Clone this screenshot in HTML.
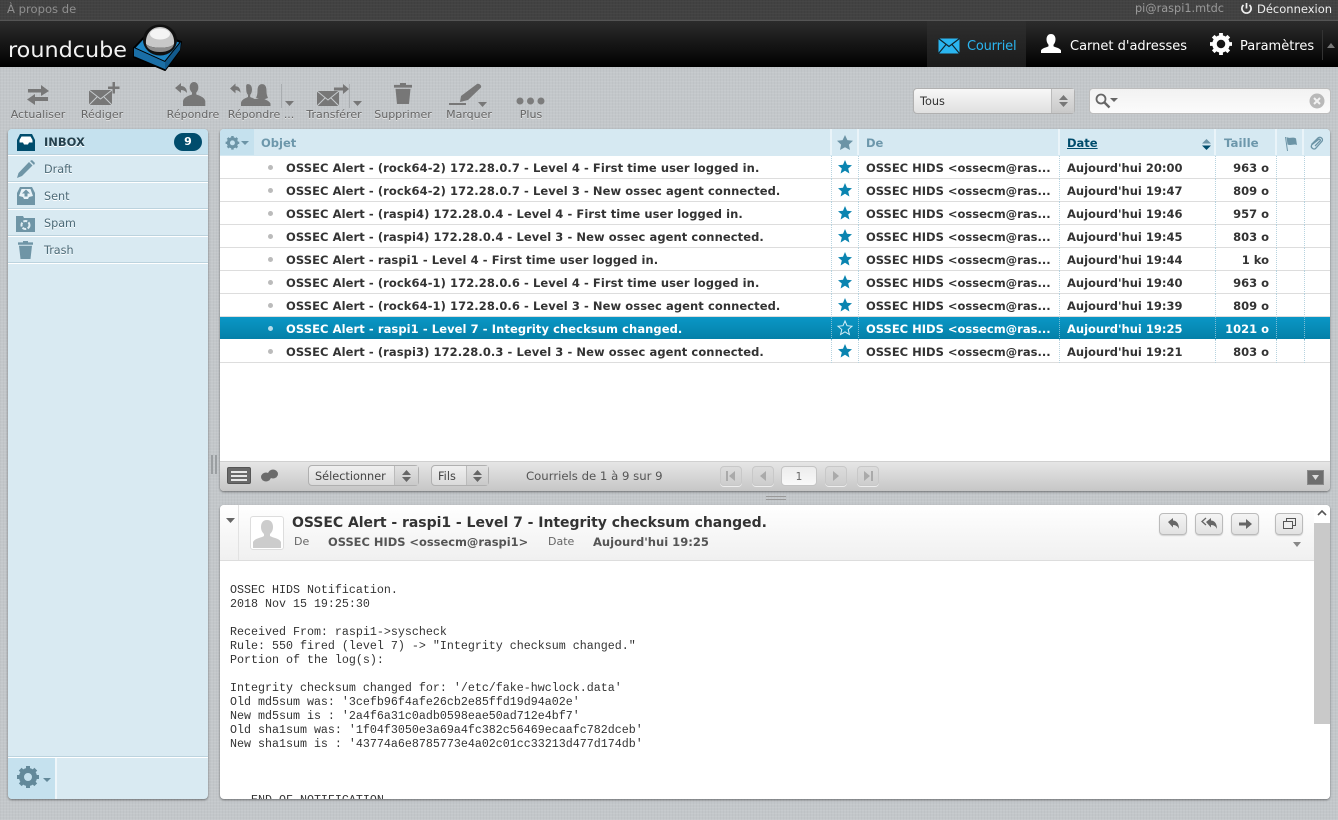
<!DOCTYPE html>
<html><head><meta charset="utf-8"><title>roundcube</title>
<style>
*{box-sizing:border-box}
html,body{margin:0;padding:0;width:1338px;height:820px;overflow:hidden}
body{position:relative;font-family:"DejaVu Sans","Liberation Sans",sans-serif;font-size:11px;color:#333;
background-color:#c3c7ca;background-image:repeating-linear-gradient(0deg,rgba(255,255,255,.07) 0 1px,transparent 1px 3px),repeating-linear-gradient(90deg,rgba(0,0,0,.025) 0 1px,transparent 1px 3px)}
.a{position:absolute;white-space:nowrap}
svg{position:absolute;overflow:visible}
#top{left:0;top:0;width:1338px;height:21px;background-color:#424242;background-image:repeating-linear-gradient(0deg,rgba(255,255,255,.025) 0 1px,transparent 1px 3px),repeating-linear-gradient(90deg,rgba(0,0,0,.05) 0 1px,transparent 1px 3px);border-bottom:1px solid #555}
#hdr{left:0;top:21px;width:1338px;height:46px;background:linear-gradient(#2c2c2c,#000)}
.nav{font-size:13px;top:38px;color:#fff}
.tb{font-size:11px;color:#666;top:108px;transform:translateX(-50%);text-shadow:0 1px 0 #e6e6e6}
.panel{background:#fff;border-radius:4px;box-shadow:0 1px 2px rgba(0,0,0,.45);overflow:hidden}
.fld{left:0;width:200px;height:27px;background:#d9eaf2;border-bottom:1px solid #fff;box-shadow:inset 0 -1px 0 #bcd3de;color:#4d6b78;font-size:11.2px;line-height:28px;padding-left:36px;text-shadow:0 1px 0 #fff}
.hc{position:absolute;top:0;height:26px;font-size:11.5px;font-weight:bold;color:#6d97ab;line-height:29px;border-right:2px solid #eaf4f9;background:#d6e9f2}
.r{position:absolute;left:0;width:1110px;height:23px;border-bottom:1px solid #ddd;font-weight:bold;font-size:11.5px;color:#333;line-height:25px}
.r span{position:absolute;top:0;white-space:nowrap}
.r .s{left:66px;letter-spacing:.08px}.r .f{left:646px}.r .d{left:847px}.r .z{right:61px}
.r i{position:absolute;top:0;bottom:-1px;width:0;border-left:1px dotted #b7d3df}
.r b.dot{position:absolute;left:48px;top:9px;width:5px;height:5px;border-radius:50%;background:#bbb}
.r.sel{background:linear-gradient(#0a97c6,#0480a8);color:#fff;border-bottom-color:#fff}
.r.sel i{border-left-color:#7dbdd5}
.btn{position:absolute;border:1px solid #b0b0b0;border-radius:4px;background:linear-gradient(#f0f0f0,#dadada);font-size:11.3px;color:#444;line-height:21px}
.spin{position:absolute;right:0;top:0;bottom:0;background:linear-gradient(#e2e2e2,#c9c9c9);border-left:1px solid #bbb}
.pg{position:absolute;top:466px;width:22px;height:20px;border:1px solid #c8c8c8;border-radius:4px;background:linear-gradient(#dcdcdc,#cdcdcd);box-shadow:0 1px 0 #eee}
.ab{position:absolute;top:513px;width:28px;height:22px;border:1px solid #bbb;border-radius:4px;background:linear-gradient(#f4f4f4,#e2e2e2);box-shadow:0 1px 1px rgba(0,0,0,.15)}
pre{position:absolute;left:10px;top:78px;margin:0;font-family:"Liberation Mono",monospace;font-size:11.67px;line-height:14px;color:#333}
</style></head><body>

<div class="a" id="top"></div>
<div class="a" style="left:7px;top:2px;color:#8f8f8f;font-size:11.6px">À propos de</div>
<div class="a" style="left:1135px;top:2px;color:#9a9a9a;font-size:11.3px">pi@raspi1.mtdc</div>
<svg style="left:1240px;top:2px" width="13" height="13" viewBox="0 0 13 13"><path d="M3.5 3A4.6 4.6 0 1 0 9.500 3" fill="none" stroke="#eee" stroke-width="1.700"/><path d="M6.500 1v5.500" stroke="#eee" stroke-width="1.700"/></svg>
<div class="a" style="left:1257px;top:2px;color:#eee;font-size:11.5px">Déconnexion</div>

<div class="a" id="hdr"></div>
<svg style="left:0;top:21px" width="190" height="50" viewBox="0 0 190 50">
<text x="8" y="36" font-family="DejaVu Sans" font-size="21" fill="#f2f2f2" textLength="119" lengthAdjust="spacingAndGlyphs">roundcube</text>
<path d="M134 27l31 14 16-20-2 9-14 19-31-13z" fill="#125a8c" stroke="#000" stroke-width="2" stroke-linejoin="round"/>
<path d="M134 27L150 10l31 11-16 20z" fill="#1f86c4" stroke="#000" stroke-width="2" stroke-linejoin="round"/>
<path d="M134 27l31 14v8l-31-13z" fill="#1a6ea6"/>
<path d="M165 41l16-20-1 8-15 20z" fill="#125a8c"/>
<path d="M165 49l-31-13" stroke="#000" stroke-width="1.500" fill="none"/>
<ellipse cx="160" cy="19" rx="17" ry="15.500" fill="#111"/>
<path d="M146 23c-1-9 5-17 14-17s15 8 14 17c-3 5-24 5-28 0z" fill="#c8c8c8"/>
<ellipse cx="160" cy="13" rx="10" ry="5.500" fill="#f4f4f4"/>
<path d="M146 23c4 5 24 5 28 0-1 5-6 8-14 8s-13-3-14-8z" fill="#8c8c8c"/>
</svg>

<div class="a" style="left:927px;top:21px;width:99px;height:46px;background:linear-gradient(#2f2f2f,#1b1b1b)"></div>
<svg style="left:938px;top:38px" width="22" height="16" viewBox="0 0 22 16"><rect x=".5" y=".5" width="21" height="15" fill="#2ab5f0"/><path d="M.5 .5l10.500 8 10.500-8M.5 15.500l7.500-9M21.500 15.500l-7.500-9" fill="none" stroke="#11242e" stroke-width="1.200"/></svg>
<div class="a nav" style="left:967px;top:39px;color:#2ab5f0;letter-spacing:-.2px">Courriel</div>
<svg style="left:1041px;top:34px" width="20" height="20" viewBox="0 0 20 20"><path d="M10 0c3 0 4.500 2.400 4.500 5.400 0 2.400-1 4.300-2 5.300v1.500c2 1.300 6.500 1.700 7.500 4.300V19H0v-2.500c1-2.600 5.500-3 7.500-4.300v-1.500c-1-1-2-2.900-2-5.300C5.500 2.400 7 0 10 0z" fill="#fff"/></svg>
<div class="a nav" style="left:1070px;top:39px">Carnet d'adresses</div>
<svg style="left:1210px;top:33px" width="22" height="22" viewBox="0 0 22 22"><circle cx="11" cy="11" r="6.500" fill="none" stroke="#fff" stroke-width="4.500"/><path d="M11 0v22M0 11h22M3.200 3.200l15.600 15.600M18.800 3.200L3.200 18.800" stroke="#fff" stroke-width="3.800" stroke-dasharray="4 14 4"/></svg>
<div class="a nav" style="left:1240px;top:39px">Paramètres</div>
<div class="a" style="left:1322px;top:30px;width:1px;height:30px;background:#333"></div>
<svg style="left:1327px;top:43px" width="8" height="5"><path d="M0 5l4-5 4 5z" fill="#777"/></svg>

<!-- toolbar icons -->
<svg style="left:26px;top:84px" width="24" height="22" viewBox="0 0 24 22" fill="#777"><path d="M2 5h13V1l8 6-8 5V8.500H2zM22 13H9v-3L1 15.500 9 21v-4h13z"/></svg>
<svg style="left:88px;top:82px" width="34" height="26" viewBox="0 0 34 26"><path d="M1 8h23v15H1z" fill="#777"/><path d="M1 8l11.500 9L24 8M1 23l8-8M24 23l-8-8" fill="none" stroke="#c8cccf" stroke-width="1"/><path d="M24.500 0H27v4.500h4.500V7H27v4.500h-2.500V7H20V4.500h4.500z" fill="#777"/></svg>
<svg style="left:174px;top:82px" width="32" height="25" viewBox="0 0 32 25" fill="#777"><path d="M20 0c3 0 4.300 2.500 4.300 5.500 0 2.300-1 4-2 5v2c2 1 8 2 9 6.500v5H9v-5c1-4.500 7-5.500 9-6.500v-2c-1-1-2.300-2.700-2.300-5C15.700 2.500 17 0 20 0z"/><path d="M1 6l6-5v3c3 0 6 2 6 7-1.500-2-3.500-3-6-3v3z"/></svg>
<svg style="left:229px;top:83px" width="44" height="23" viewBox="0 2 44 21" preserveAspectRatio="none" fill="#777"><path d="M15 3c3 0 4 2.500 4 5 0 2.200-.8 3.800-1.800 4.800v2c2 1 6.800 1.800 7.800 5.200v3H8v-3c1-3.400 5-4.200 7-5.200v-2c-1-1-1.800-2.600-1.800-4.800 0-2.500-.8-5 1.800-5z" transform="translate(4 0)"/><path d="M33 3c3.500 0 4.500 2.800 4.500 6s.6 5 1.500 6.500c-1.500 1-3.500 1.200-3.500 1.200 2 1 4.500 1.500 6 4V23H26v-2c-.5-2.500-1-3.500-2-3.500 1-1 4.500-1.200 6-1.300 0 0-2-.3-3-.7 1-1.500 1.500-3.500 1.500-6.500s1-6 4.500-6z"/><path d="M1 7l5.500-4.500V5c3 0 5 2 5 6-1-1.500-3-2.500-5-2.500v3z"/></svg>
<div class="a" style="left:281px;top:84px;width:1px;height:24px;background:#a9adb0"></div>
<svg style="left:285px;top:101px" width="9" height="5"><path d="M0 0h9L4.500 5z" fill="#777"/></svg>
<svg style="left:316px;top:84px" width="34" height="23" viewBox="0 0 34 23"><path d="M1 7h22v15H1z" fill="#777"/><path d="M1 7l11 9 11-9M1 22l8-8M23 22l-8-8" fill="none" stroke="#c8cccf"/><path d="M18 3.500h9V0l6 5-6 5V6.500h-9z" fill="#777"/></svg>
<div class="a" style="left:349px;top:84px;width:1px;height:24px;background:#a9adb0"></div>
<svg style="left:353px;top:101px" width="9" height="5"><path d="M0 0h9L4.500 5z" fill="#777"/></svg>
<svg style="left:394px;top:83px" width="18" height="21" viewBox="0 0 18 23" preserveAspectRatio="none" fill="#777"><path d="M6 0h6v2h6v3H0V2h6zM1.500 6.500h15L15 23H3z"/></svg>
<svg style="left:449px;top:83px" width="34" height="24" viewBox="0 0 34 24" fill="#777"><path d="M0 20h17v2H0zM11 19l1-6L28 1c2-1 5 1.500 4 3.500L19 17z"/></svg>
<svg style="left:478px;top:102px" width="9" height="5"><path d="M0 0h9L4.500 5z" fill="#777"/></svg>
<svg style="left:516px;top:97px" width="30" height="8"><circle cx="4" cy="4" r="3.500" fill="#7c7c7c"/><circle cx="14.500" cy="4" r="3.500" fill="#7c7c7c"/><circle cx="25" cy="4" r="3.500" fill="#7c7c7c"/></svg>

<div class="a tb" style="left:38px">Actualiser</div>
<div class="a tb" style="left:102px">Rédiger</div>
<div class="a tb" style="left:193px">Répondre</div>
<div class="a tb" style="left:261px">Répondre ...</div>
<div class="a tb" style="left:334px">Transférer</div>
<div class="a tb" style="left:403px">Supprimer</div>
<div class="a tb" style="left:469px">Marquer</div>
<div class="a tb" style="left:531px">Plus</div>

<!-- filter -->
<div class="btn" style="left:913px;top:88px;width:162px;height:26px;padding-left:6px;line-height:25px;color:#333;border-radius:4px;background:linear-gradient(#f8f8f8,#e0e0e0)">Tous
<div class="spin" style="width:23px"><svg style="left:7px;top:6px" width="9" height="12"><path d="M0 5L4.500 0 9 5zM0 7h9l-4.500 5z" fill="#777"/></svg></div></div>
<div class="a" style="left:1089px;top:88px;width:242px;height:26px;border:1px solid #bcbcbc;border-radius:4px;background:linear-gradient(#f2f2f2,#fbfbfb)"></div>
<svg style="left:1095px;top:93px" width="24" height="16" viewBox="0 0 24 16"><circle cx="6" cy="6" r="4.500" fill="none" stroke="#666" stroke-width="1.800"/><path d="M9.500 9.500l5 5" stroke="#666" stroke-width="2.400"/><path d="M15 5h8l-4 4z" fill="#666"/></svg>
<svg style="left:1309px;top:93px" width="16" height="16" viewBox="0 0 16 16"><circle cx="8" cy="8" r="7.500" fill="#b9b9b9"/><path d="M5 5l6 6M11 5l-6 6" stroke="#f2f2f2" stroke-width="2"/></svg>

<!-- sidebar -->
<div class="a panel" style="left:8px;top:129px;width:200px;height:670px;background:#d9eaf2">
  <div class="a fld" style="top:0;background:#c5e1ee;font-weight:bold;color:#24414e;font-size:11.5px;line-height:27px">INBOX</div>
  <div class="a fld" style="top:27px">Draft</div>
  <div class="a fld" style="top:54px">Sent</div>
  <div class="a fld" style="top:81px">Spam</div>
  <div class="a fld" style="top:108px">Trash</div>
  <div class="a" style="left:166px;top:4px;width:28px;height:18px;border-radius:9px;background:#004c6c;color:#fff;font-weight:bold;font-size:11px;text-align:center;line-height:18px">9</div>
  <svg style="left:9px;top:5px" width="18" height="17" viewBox="0 0 18 17"><path d="M0 6l3-6h12l3 6v11H0z" fill="#004c6c"/><path d="M2.500 6l2-3.500h9l2 3.500v2.500H12l-1 2H7l-1-2H2.500z" fill="#fff"/></svg>
  <svg style="left:9px;top:31px" width="18" height="18" viewBox="0 0 18 18" fill="#6f95a6"><path d="M0 18l1.500-5L12 2l3.500 3.500L5 16z"/><path d="M13 1l2-1 3 3-1 2z"/></svg>
  <svg style="left:9px;top:58px" width="18" height="18" viewBox="0 0 18 18"><path d="M0 6l3-6h12l3 6v12H0z" fill="#6f95a6"/><path d="M2 9l2.500-7h9L16 9l-4 1-1 2H7l-1-2z" fill="#e8f2f7"/><path d="M9 2.500l4 4h-2.500v3h-3v-3H5z" fill="#6f95a6"/></svg>
  <svg style="left:8px;top:85px" width="19" height="18" viewBox="0 0 19 18"><path d="M0 2h7l1 2h11v14H0z" fill="#6f95a6"/><circle cx="9.500" cy="11" r="4" fill="none" stroke="#e0edf3" stroke-width="2" stroke-dasharray="4 1.500"/></svg>
  <svg style="left:10px;top:112px" width="15" height="18" viewBox="0 0 15 19" preserveAspectRatio="none" fill="#6f95a6"><path d="M5 0h5v1.500h5V4H0V1.500h5zM1 5h13l-1.500 14h-10z"/></svg>
  <div class="a" style="left:0;top:627px;width:200px;height:2px;background:#fff;border-top:1px solid #bcd3de"></div>
  <div class="a" style="left:0;top:629px;width:49px;height:41px;background:#c5e1ee;border-right:2px solid #eef6fa"></div>
  <svg style="left:9px;top:637px" width="34" height="24" viewBox="0 0 34 24"><g><circle cx="11" cy="11" r="6.500" fill="none" stroke="#63899a" stroke-width="5"/><path d="M11 0v22M0 11h22M3.200 3.200l15.600 15.600M18.800 3.200L3.200 18.800" stroke="#63899a" stroke-width="4" stroke-dasharray="4 14 4"/></g><path d="M26 12h8l-4 4z" fill="#63899a"/></svg>
</div>

<!-- splitter -->
<div class="a" style="left:211px;top:455px;width:2px;height:19px;background:#9a9ea1"></div>
<div class="a" style="left:215px;top:455px;width:2px;height:19px;background:#9a9ea1"></div>

<!-- list panel -->
<div class="a panel" style="left:220px;top:129px;width:1110px;height:362px">
  <div class="a" style="left:0;top:0;width:1110px;height:27px;background:#d6e9f2"></div>
  <div class="hc" style="left:0;width:34px;background:#c5e1ee;border:0"></div>
  <svg style="left:5px;top:7px" width="26" height="14" viewBox="0 0 26 14"><g transform="scale(.62) translate(1,0)"><circle cx="11" cy="11" r="6.500" fill="none" stroke="#6c94a6" stroke-width="5"/><path d="M11 0v22M0 11h22M3.200 3.200l15.600 15.600M18.800 3.200L3.200 18.800" stroke="#6c94a6" stroke-width="4" stroke-dasharray="4 14 4"/></g><path d="M16 5h8l-4 4z" fill="#6c94a6"/></svg>
  <div class="hc" style="left:34px;width:578px;padding-left:7px;background:#d6e9f2;">Objet</div>
  <div class="hc" style="left:612px;width:27px"></div>
  <svg style="left:617px;top:6px" width="16" height="15" viewBox="0 0 16 15"><path d="M8 0l2.400 5.100 5.600.7-4.100 3.800 1.100 5.400L8 12.300 3 15l1.100-5.400L0 5.800l5.600-.7z" fill="#6c94a6"/></svg>
  <div class="hc" style="left:639px;width:201px;padding-left:7px">De</div>
  <div class="hc" style="left:840px;width:156px;padding-left:7px;color:#004c6c;text-decoration:underline">Date</div>
  <svg style="left:982px;top:10px" width="9" height="11"><path d="M0 4.500L4.500 0 9 4.500z" fill="#6c94a6"/><path d="M0 6.500h9L4.500 11z" fill="#004c6c"/></svg>
  <div class="hc" style="left:996px;width:61px;padding-left:8px;font-size:11.8px">Taille</div>
  <div class="hc" style="left:1057px;width:27px"></div>
  <svg style="left:1065px;top:8px" width="12" height="14" viewBox="0 0 12 14"><path d="M0 0h1l2 14H2zM1.500 0c3 2 6-.5 9.500 1.500L12 8c-3-1.500-6 1-9.500-.5z" fill="#6c94a6"/></svg>
  <div class="hc" style="left:1084px;width:26px;border:0"></div>
  <svg style="left:1090px;top:7px" width="14" height="14" viewBox="0 0 14 14"><path d="M1.500 8.500L8 2c2.200-2.200 6 1 3.800 3.500L5.500 12.500c-1.700 1.700-5.500-1-3.700-3.700L8.500 3.500c1-1 2.500.5 1.500 1.500L5 10" fill="none" stroke="#6c94a6" stroke-width="1.300"/></svg>

  <div class="r" style="top:27px"><b class="dot"></b><span class="s">OSSEC Alert - (rock64-2) 172.28.0.7 - Level 4 - First time user logged in.</span><i style="left:611px"></i><i style="left:638px"></i><span class="f">OSSEC HIDS &lt;ossecm@ras...</span><i style="left:839px"></i><span class="d">Aujourd'hui 20:00</span><i style="left:995px"></i><span class="z">963 o</span><i style="left:1056px"></i><i style="left:1084px"></i></div>
  <div class="r" style="top:50px"><b class="dot"></b><span class="s">OSSEC Alert - (rock64-2) 172.28.0.7 - Level 3 - New ossec agent connected.</span><i style="left:611px"></i><i style="left:638px"></i><span class="f">OSSEC HIDS &lt;ossecm@ras...</span><i style="left:839px"></i><span class="d">Aujourd'hui 19:47</span><i style="left:995px"></i><span class="z">809 o</span><i style="left:1056px"></i><i style="left:1084px"></i></div>
  <div class="r" style="top:73px"><b class="dot"></b><span class="s">OSSEC Alert - (raspi4) 172.28.0.4 - Level 4 - First time user logged in.</span><i style="left:611px"></i><i style="left:638px"></i><span class="f">OSSEC HIDS &lt;ossecm@ras...</span><i style="left:839px"></i><span class="d">Aujourd'hui 19:46</span><i style="left:995px"></i><span class="z">957 o</span><i style="left:1056px"></i><i style="left:1084px"></i></div>
  <div class="r" style="top:96px"><b class="dot"></b><span class="s">OSSEC Alert - (raspi4) 172.28.0.4 - Level 3 - New ossec agent connected.</span><i style="left:611px"></i><i style="left:638px"></i><span class="f">OSSEC HIDS &lt;ossecm@ras...</span><i style="left:839px"></i><span class="d">Aujourd'hui 19:45</span><i style="left:995px"></i><span class="z">803 o</span><i style="left:1056px"></i><i style="left:1084px"></i></div>
  <div class="r" style="top:119px"><b class="dot"></b><span class="s">OSSEC Alert - raspi1 - Level 4 - First time user logged in.</span><i style="left:611px"></i><i style="left:638px"></i><span class="f">OSSEC HIDS &lt;ossecm@ras...</span><i style="left:839px"></i><span class="d">Aujourd'hui 19:44</span><i style="left:995px"></i><span class="z">1 ko</span><i style="left:1056px"></i><i style="left:1084px"></i></div>
  <div class="r" style="top:142px"><b class="dot"></b><span class="s">OSSEC Alert - (rock64-1) 172.28.0.6 - Level 4 - First time user logged in.</span><i style="left:611px"></i><i style="left:638px"></i><span class="f">OSSEC HIDS &lt;ossecm@ras...</span><i style="left:839px"></i><span class="d">Aujourd'hui 19:40</span><i style="left:995px"></i><span class="z">963 o</span><i style="left:1056px"></i><i style="left:1084px"></i></div>
  <div class="r" style="top:165px"><b class="dot"></b><span class="s">OSSEC Alert - (rock64-1) 172.28.0.6 - Level 3 - New ossec agent connected.</span><i style="left:611px"></i><i style="left:638px"></i><span class="f">OSSEC HIDS &lt;ossecm@ras...</span><i style="left:839px"></i><span class="d">Aujourd'hui 19:39</span><i style="left:995px"></i><span class="z">809 o</span><i style="left:1056px"></i><i style="left:1084px"></i></div>
  <div class="r sel" style="top:188px"><b class="dot" style="background:#b5dcea"></b><span class="s">OSSEC Alert - raspi1 - Level 7 - Integrity checksum changed.</span><i style="left:611px"></i><i style="left:638px"></i><span class="f">OSSEC HIDS &lt;ossecm@ras...</span><i style="left:839px"></i><span class="d">Aujourd'hui 19:25</span><i style="left:995px"></i><span class="z">1021 o</span><i style="left:1056px"></i><i style="left:1084px"></i></div>
  <div class="r" style="top:211px"><b class="dot"></b><span class="s">OSSEC Alert - (raspi3) 172.28.0.3 - Level 3 - New ossec agent connected.</span><i style="left:611px"></i><i style="left:638px"></i><span class="f">OSSEC HIDS &lt;ossecm@ras...</span><i style="left:839px"></i><span class="d">Aujourd'hui 19:21</span><i style="left:995px"></i><span class="z">803 o</span><i style="left:1056px"></i><i style="left:1084px"></i></div>

  <svg style="left:618px;top:31px" width="14" height="200" viewBox="0 0 14 200"><defs><path id="st" d="M7 0l2 4.700 5 .5-3.800 3.300 1.200 5L7 10.800 2.600 13.500l1.200-5L0 5.200l5-.5z"/></defs>
    <use href="#st" y="0" fill="#0a84b0"/><use href="#st" y="23" fill="#0a84b0"/><use href="#st" y="46" fill="#0a84b0"/><use href="#st" y="69" fill="#0a84b0"/><use href="#st" y="92" fill="#0a84b0"/><use href="#st" y="115" fill="#0a84b0"/><use href="#st" y="138" fill="#0a84b0"/><use href="#st" y="161" fill="none" stroke="#d5eef7"/><use href="#st" y="184" fill="#0a84b0"/></svg>

  <!-- list footer -->
  <div class="a" style="left:0;top:332px;width:1110px;height:30px;background:linear-gradient(#e6e6e6,#c6c6c6);border-top:1px solid #d0d0d0"></div>
  <div class="a" style="left:7px;top:338px;width:24px;height:17px;background:#6a6a6a;border-radius:2px;border:1px solid #555"></div>
  <svg style="left:11px;top:342px" width="16" height="10"><path d="M0 0h16v2H0zM0 4h16v2H0zM0 8h16v2H0z" fill="#e8e8e8"/></svg>
  <svg style="left:41px;top:340px" width="17" height="13" viewBox="0 0 17 13" fill="#6b6b6b"><ellipse cx="5" cy="8" rx="5" ry="4.500"/><ellipse cx="12" cy="5" rx="5" ry="4.500"/></svg>
  <div class="btn" style="left:88px;top:336px;width:111px;height:21px;padding-left:6px">Sélectionner<div class="spin" style="width:24px"><svg style="left:7px;top:4px" width="9" height="12"><path d="M0 5L4.500 0 9 5zM0 7h9l-4.500 5z" fill="#666"/></svg></div></div>
  <div class="btn" style="left:211px;top:336px;width:58px;height:21px;padding-left:6px">Fils<div class="spin" style="width:22px"><svg style="left:6px;top:4px" width="9" height="12"><path d="M0 5L4.500 0 9 5zM0 7h9l-4.500 5z" fill="#666"/></svg></div></div>
  <div class="a" style="left:306px;top:340px;color:#555;font-size:11.7px">Courriels de 1 à 9 sur 9</div>
</div>

<div class="pg" style="left:720px"><svg style="left:5px;top:3px" width="10" height="12"><path d="M0 1h2v10H0zM9 1v10L3 6z" fill="#aaa"/></svg></div>
<div class="pg" style="left:752px"><svg style="left:6px;top:3px" width="8" height="12"><path d="M7 1v10L1 6z" fill="#aaa"/></svg></div>
<div class="a" style="left:781px;top:466px;width:36px;height:20px;border:1px solid #c4c4c4;border-radius:4px;background:linear-gradient(#ececec,#f9f9f9);text-align:center;line-height:20px;font-size:10.500px;color:#666">1</div>
<div class="pg" style="left:825px"><svg style="left:6px;top:3px" width="8" height="12"><path d="M1 1v10l6-5z" fill="#aaa"/></svg></div>
<div class="pg" style="left:857px"><svg style="left:5px;top:3px" width="10" height="12"><path d="M8 1h2v10H8zM1 1v10l6-5z" fill="#aaa"/></svg></div>
<div class="a" style="left:1307px;top:470px;width:17px;height:15px;background:#6e6e6e;border:1px solid #8a8a8a"></div>
<svg style="left:1312px;top:475px" width="7" height="5"><path d="M0 0h7L3.500 5z" fill="#ddd"/></svg>
<div class="a" style="left:766px;top:496px;width:20px;height:1px;background:#999"></div>
<div class="a" style="left:766px;top:499px;width:20px;height:1px;background:#999"></div>

<!-- preview -->
<div class="a panel" style="left:220px;top:505px;width:1110px;height:294px">
  <div class="a" style="left:0;top:0;width:1094px;height:56px;background:linear-gradient(#fff,#f0f0f0);border-bottom:1px solid #ddd"></div>
  <div class="a" style="left:18px;top:0;width:1px;height:55px;background:#e2e2e2"></div>
  <svg style="left:6px;top:13px" width="9" height="5"><path d="M0 0h9L4.500 5z" fill="#666"/></svg>
  <div class="a" style="left:30px;top:11px;width:34px;height:34px;border:1px solid #ddd;border-radius:3px;background:#fff"></div>
  <svg style="left:33px;top:15px" width="28" height="28" viewBox="0 0 28 28"><path d="M14 0c4 0 6 3 6 7 0 3-1 5-3 7v2c3 2 9 2 11 6v6H0v-6c2-4 8-4 11-6v-2c-2-2-3-4-3-7 0-4 2-7 6-7z" fill="#ccc"/></svg>
  <div class="a" style="left:72px;top:9px;font-size:14px;line-height:18px;font-weight:bold;color:#333;letter-spacing:-.03px">OSSEC Alert - raspi1 - Level 7 - Integrity checksum changed.</div>
  <div class="a" style="left:74px;top:30px;color:#666;font-size:11px">De</div>
  <div class="a" style="left:108px;top:30px;color:#555;font-size:11.45px;font-weight:bold">OSSEC HIDS &lt;ossecm@raspi1&gt;</div>
  <div class="a" style="left:328px;top:30px;color:#666;font-size:11px">Date</div>
  <div class="a" style="left:373px;top:30px;color:#555;font-size:11.55px;font-weight:bold">Aujourd'hui 19:25</div>
  <pre>OSSEC HIDS Notification.
2018 Nov 15 19:25:30

Received From: raspi1-&gt;syscheck
Rule: 550 fired (level 7) -&gt; "Integrity checksum changed."
Portion of the log(s):

Integrity checksum changed for: '/etc/fake-hwclock.data'
Old md5sum was: '3cefb96f4afe26cb2e85ffd19d94a02e'
New md5sum is : '2a4f6a31c0adb0598eae50ad712e4bf7'
Old sha1sum was: '1f04f3050e3a69a4fc382c56469ecaafc782dceb'
New sha1sum is : '43774a6e8785773e4a02c01cc33213d477d174db'



   END OF NOTIFICATION</pre>
  <div class="a" style="left:1094px;top:0;width:16px;height:294px;background:#fff"></div>
  <div class="a" style="left:1094px;top:18px;width:16px;height:201px;background:#c9c9c9"></div>
  <svg style="left:1098px;top:5px" width="8" height="6"><path d="M0 5l4-4 4 4" fill="none" stroke="#555" stroke-width="1.600"/></svg>
</div>
<div class="ab" style="left:1159px"><svg style="left:8px;top:4px" width="12" height="12"><path d="M0 4l5-4v2.500c3 0 6 2.500 6 8.500-1-2.500-3-4-6-4v2.500z" fill="#666"/></svg></div>
<div class="ab" style="left:1195px"><svg style="left:6px;top:4px" width="15" height="12"><path d="M4 4l5-4v2.500c3 0 6 2.500 6 8.500-1-2.500-3-4-6-4v2.500z" fill="#666"/><path d="M4 0L0 3.500 4 7" fill="none" stroke="#666" stroke-width="1.300"/></svg></div>
<div class="ab" style="left:1231px"><svg style="left:7px;top:5px" width="13" height="10"><path d="M0 3.500h7V0l6 5-6 5V6.500H0z" fill="#666"/></svg></div>
<div class="ab" style="left:1275px"><svg style="left:7px;top:4px" width="13" height="12"><rect x="3.500" y=".5" width="9" height="7" fill="none" stroke="#555"/><rect x=".5" y="3.500" width="9" height="7" fill="#eee" stroke="#555"/></svg></div>
<svg style="left:1293px;top:542px" width="8" height="5"><path d="M0 0h8L4 5z" fill="#888"/></svg>

</body></html>
